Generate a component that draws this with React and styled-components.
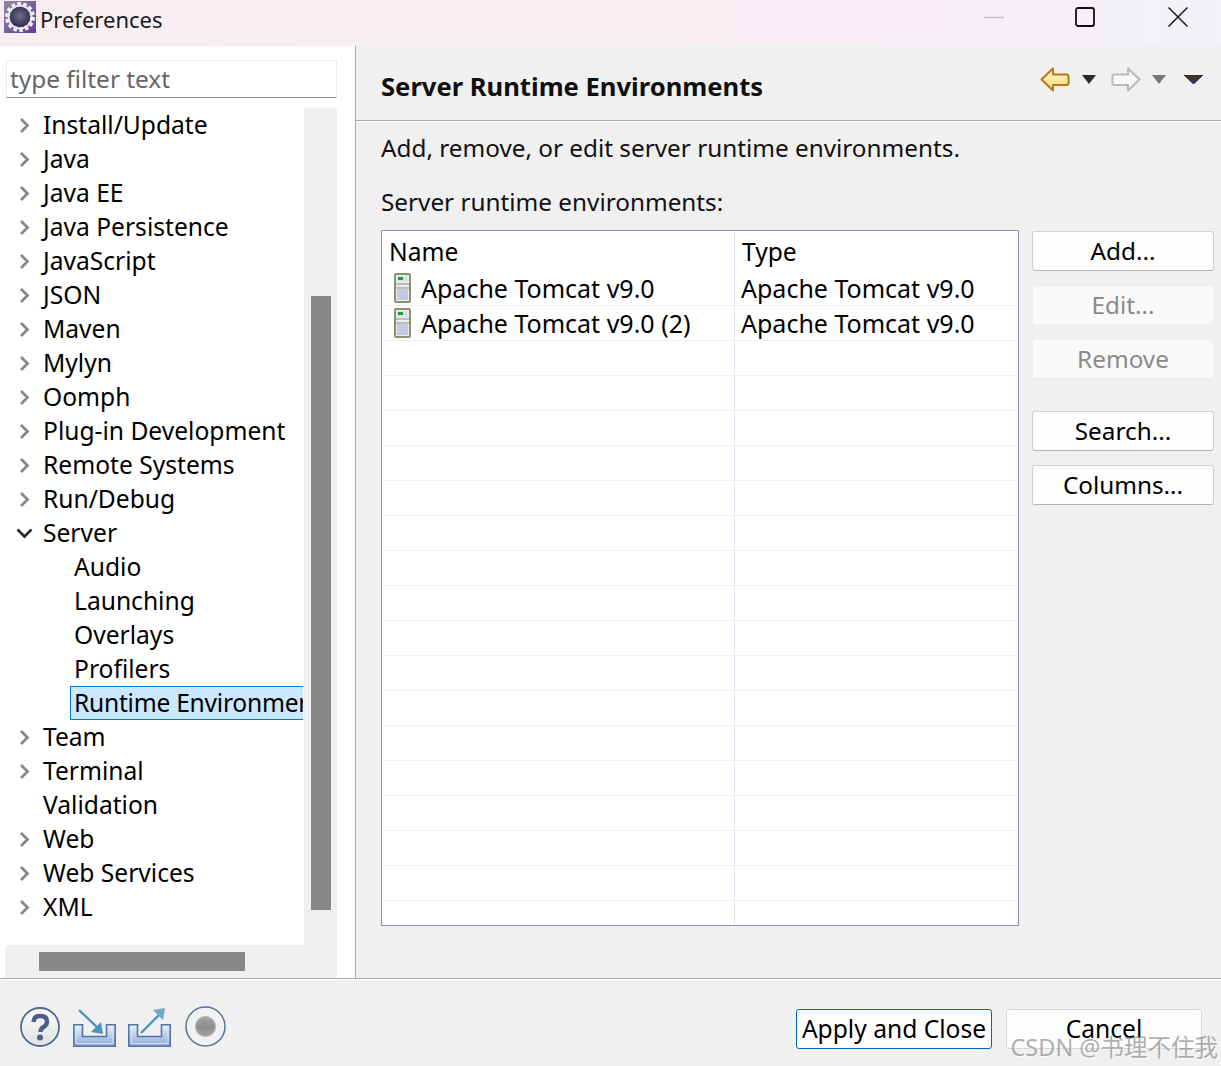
import React from 'react';
import styled, { createGlobalStyle } from 'styled-components';

const GlobalStyle = createGlobalStyle`
  html, body {
    margin: 0;
    padding: 0;
    background: #f0f0f0;
  }
  body {
    font-family: "Noto Sans", "Open Sans", sans-serif;
    font-size: 25px;
    color: #000;
  }
  * { box-sizing: border-box; }
`

const Window = styled.div`
  position: relative;
  width: 1221px;
  height: 1066px;
  display: flex;
  flex-direction: column;
  overflow: hidden;
`

const TitleBar = styled.div`
  height: 46px;
  flex: none;
  display: flex;
  align-items: flex-start;
  padding: 1px 0 0 4px;
  background: linear-gradient(90deg, #f7eef2 0%, #f8eef5 75%, #f3f2f9 100%);
`

const TitleText = styled.span`
  margin-left: 4px;
  margin-top: 2px;
  font-size: 22px;
  line-height: 32px;
  color: #1a1a1a;
`

const WindowControls = styled.div`
  margin-left: auto;
  margin-top: 6px;
  display: flex;
  gap: 71px;
  padding-right: 33px;
  svg:last-child {
    margin-left: 2px;
  }
`

const Body = styled.div`
  flex: 1;
  min-height: 0;
  display: flex;
`

const Sidebar = styled.div`
  width: 356px;
  flex: none;
  background: #fff;
  border-right: 1px solid #a8a8a8;
  padding: 14px 18px 0 5px;
  display: flex;
  flex-direction: column;
`

const FilterInput = styled.div`
  height: 38px;
  flex: none;
  margin-left: 1px;
  padding-left: 3px;
  line-height: 35px;
  font-size: 24.4px;
  color: #666;
  background: #fff;
  border: 1px solid #ececec;
  border-bottom: 1px solid #8c8c8c;
`

const TreeFrame = styled.div`
  flex: 1;
  min-height: 0;
  margin-top: 10px;
  display: grid;
  grid-template-columns: 299px 33px;
  grid-template-rows: 837px 33px;
`

const Tree = styled.div`
  overflow: hidden;
  background: #fff;
  font-size: 24.6px;
`

const TreeRow = styled.div`
  height: 34px;
  display: flex;
  align-items: center;
  white-space: nowrap;
  padding-left: ${props => (props.$child ? '65px' : '11px')};
`

const Chevron = styled.span`
  width: 17px;
  height: 17px;
  flex: none;
  margin-right: 8px;
  display: flex;
  align-items: center;
  justify-content: center;
`

const TreeLabel = styled.span`
  flex: ${props => (props.$selected ? '1' : 'none')};
  height: 34px;
  line-height: 33px;
  padding-left: 4px;
  margin-left: ${props => (props.$indented ? '0' : '-2px')};
  ${props => props.$selected && `
    background: #cce8ff;
    border: 1px solid #0078d7;
    border-right: none;
    padding-left: 3px;
    line-height: 31px;
    margin-right: 1px;
    letter-spacing: -0.25px;
    overflow: hidden;
  `}
`

const ScrollTrack = styled.div`
  background: #f0f0f0;
  padding: ${props => (props.$horizontal ? '7px 0 7px 34px' : '188px 6px 0 7px')};
  ${props => props.$horizontal && 'grid-column: 1 / 3;'}
`

const ScrollThumb = styled.div`
  background: #888;
  width: ${props => (props.$horizontal ? '206px' : '20px')};
  height: ${props => (props.$horizontal ? '19px' : '614px')};
`

const Content = styled.div`
  flex: 1;
  min-width: 0;
  display: flex;
  flex-direction: column;
`

const PageHeader = styled.div`
  height: 75px;
  flex: none;
  display: flex;
  align-items: center;
  padding: 6px 18px 0 25px;
  border-bottom: 1px solid #a8a8a8;
  box-shadow: 0 1px 0 #fff;
`

const PageTitle = styled.h1`
  margin: 0;
  font-size: 25.6px;
  font-weight: 700;
  color: #0f0f0f;
`

const HeaderTools = styled.div`
  margin-left: auto;
  margin-top: -14px;
  display: flex;
  align-items: center;
`

const PageBody = styled.div`
  flex: 1;
  min-height: 0;
  padding: 10px 7px 0 25px;
`

const Description = styled.p`
  margin: 0;
  height: 34px;
  line-height: 33px;
  font-size: 24.3px;
  color: #111;
`

const SectionLabel = styled(Description)`
  margin-top: 20px;
`

const TableArea = styled.div`
  display: flex;
  margin-top: 11px;
  gap: 13px;
`

const Table = styled.div`
  width: 638px;
  height: 696px;
  flex: none;
  background: #fff;
  border: 1px solid #8d96a8;
  padding-top: 1px;
  overflow: hidden;
`

const TableRow = styled.div`
  display: grid;
  grid-template-columns: 353px 1fr;
  height: ${props => (props.$header ? '39px' : '35px')};
  ${props => !props.$header && 'border-bottom: 1px solid #eef0f3;'}
`

const Cell = styled.div`
  display: flex;
  align-items: center;
  white-space: nowrap;
  padding-left: ${props => (props.$header ? '7px' : props.$second ? '6px' : '12px')};
  font-size: ${props => (props.$header ? '24.6px' : '25px')};
  border-right: ${props => (props.$second ? 'none' : '1px solid #dfe8f5')};
`

const CellIcon = styled.span`
  width: 18px;
  height: 32px;
  flex: none;
  margin-right: 9px;
  display: flex;
  align-items: center;
`

const ButtonColumn = styled.div`
  width: 182px;
  flex: none;
  padding-top: 1px;
  display: flex;
  flex-direction: column;
`

const PushButton = styled.div`
  height: 40px;
  margin-bottom: ${props => props.$gap || 14}px;
  padding-bottom: 2px;
  display: flex;
  align-items: center;
  justify-content: center;
  border-radius: 3px;
  font-size: 24.3px;
  background: ${props => (props.$disabled ? '#f9f9f9' : '#fdfdfd')};
  border: 1px solid ${props => (props.$disabled ? '#efefef' : '#d0d0d0')};
  border-bottom-color: ${props => (props.$disabled ? '#ececec' : '#b4b4b4')};
  color: ${props => (props.$disabled ? '#8a8a8a' : '#000')};
`

const Footer = styled.div`
  height: 88px;
  flex: none;
  display: flex;
  align-items: center;
  padding: 8px 19px 0 20px;
  background: #f0f0f0;
  border-top: 1px solid #a8a8a8;
  box-shadow: inset 0 1px 0 #fff;
`

const FooterTools = styled.div`
  display: flex;
  align-items: center;
  gap: 12px;
  svg:first-child {
    margin-right: 1px;
  }
  svg:last-child {
    margin-left: 2px;
  }
`

const FooterButtons = styled.div`
  margin-left: auto;
  margin-top: 5px;
  display: flex;
  gap: 14px;
`

const DialogButton = styled(PushButton)`
  width: 196px;
  margin-bottom: 0;
  font-size: 24.6px;
  border-color: ${props => (props.$primary ? '#0067c0' : '#d6d6d6')};
  border-bottom-color: ${props => (props.$primary ? '#0067c0' : '#d6d6d6')};
`

const HeaderSpacer = styled.span`
  width: ${props => props.$width}px;
`

const Watermark = styled.div`
  position: absolute;
  right: 3px;
  bottom: 3px;
  font-family: "Noto Sans", "Noto Sans CJK SC", sans-serif;
  font-size: 23.5px;
  line-height: 32px;
  white-space: nowrap;
  color: rgba(120, 120, 120, 0.6);
  text-shadow: 1px 1px 0 rgba(255, 255, 255, 0.7);
`

const AppIcon = () => (
  <svg width="32" height="32" viewBox="0 0 32 32">
    <defs>
      <linearGradient id="appBack" x1="0" y1="0" x2="1" y2="1">
        <stop offset="0" stopColor="#8d8aa0" />
        <stop offset="1" stopColor="#5f3c9a" />
      </linearGradient>
      <radialGradient id="appCore" cx="0.5" cy="0.45" r="0.6">
        <stop offset="0" stopColor="#6d6a8e" />
        <stop offset="1" stopColor="#2a2748" />
      </radialGradient>
    </defs>
    <rect width="32" height="32" fill="url(#appBack)" />
    <circle cx="16" cy="16" r="12.5" fill="none" stroke="#f2f2f2" strokeWidth="5" strokeDasharray="3.4 2.2" />
    <circle cx="16" cy="16" r="11.5" fill="none" stroke="#e8e8e8" strokeWidth="2" />
    <circle cx="16" cy="16" r="10.2" fill="url(#appCore)" />
  </svg>
)

const MinimizeIcon = () => (
  <svg width="20" height="20" viewBox="0 0 20 20">
    <path d="M0 10.5H20" stroke="#c8c4c8" strokeWidth="1.6" />
  </svg>
)

const MaximizeIcon = () => (
  <svg width="20" height="20" viewBox="0 0 20 20">
    <rect x="1" y="1" width="18" height="18" rx="2" fill="none" stroke="#111" strokeWidth="1.8" />
  </svg>
)

const CloseIcon = () => (
  <svg width="20" height="20" viewBox="0 0 20 20">
    <path d="M0.5 0.5L19.5 19.5M19.5 0.5L0.5 19.5" stroke="#1a1a1a" strokeWidth="1.5" />
  </svg>
)

const BackIcon = () => (
  <svg width="30" height="25" viewBox="0 0 30 25">
    <defs>
      <linearGradient id="backFill" x1="0" y1="0" x2="0" y2="1">
        <stop offset="0" stopColor="#fffbe2" />
        <stop offset="1" stopColor="#fbd66f" />
      </linearGradient>
    </defs>
    <path d="M1.5 12.5L13 1.5V7.5H26.5Q28.5 7.5 28.5 9.5V16Q28.5 18 26.5 18H13V23.5Z" fill="url(#backFill)" stroke="#b87a14" strokeWidth="2" strokeLinejoin="round" />
  </svg>
)

const ForwardIcon = () => (
  <svg width="30" height="25" viewBox="0 0 30 25">
    <path d="M28.5 12.5L17 1.5V7.5H3.5Q1.5 7.5 1.5 9.5V16Q1.5 18 3.5 18H17V23.5Z" fill="#f8f8f8" stroke="#b8b8b8" strokeWidth="2" strokeLinejoin="round" />
  </svg>
)

const DropTriangle = styled(({ color, width = 14, edge, className }) => (
  <svg className={className} width={width} height="9" viewBox={`0 0 ${width} 9`}>
    <path d={`M0 0H${width}L${width / 2} 9Z`} fill={color} />
    {edge && <path d={`M0 0.5H${width}M0 0L${width / 2} 9L${width} 0`} fill="none" stroke={edge} strokeWidth="1" />}
  </svg>
))`
  margin-left: ${props => props.$offset || 0}px;
`

const ChevronRight = () => (
  <svg width="11" height="17" viewBox="0 0 11 17">
    <path d="M2 2L8.5 8.5L2 15" fill="none" stroke="#868686" strokeWidth="2.7" />
  </svg>
)

const ChevronDown = () => (
  <svg width="17" height="11" viewBox="0 0 17 11">
    <path d="M1.5 1.5L8.5 8.5L15.5 1.5" fill="none" stroke="#2b2b2b" strokeWidth="2.7" />
  </svg>
)

const ServerIcon = () => (
  <svg width="18" height="30" viewBox="0 0 18 30">
    <rect x="1" y="1" width="15" height="28" rx="1" fill="#e9ecf2" stroke="#8b9270" strokeWidth="2" />
    <rect x="3" y="3" width="11" height="6" fill="#dfe3ea" />
    <rect x="4" y="4" width="5" height="3" fill="#12a33c" />
    <path d="M2 11H15" stroke="#8b9270" strokeWidth="1" />
    <rect x="3" y="16" width="11" height="11" fill="#c3cbe2" />
    <path d="M2 15H15" stroke="#8b9270" strokeWidth="1" />
  </svg>
)

const HelpIcon = () => (
  <svg width="40" height="40" viewBox="0 0 40 40">
    <defs>
      <linearGradient id="helpFill" x1="0" y1="0" x2="0" y2="1">
        <stop offset="0" stopColor="#fafafa" />
        <stop offset="1" stopColor="#e2e2e2" />
      </linearGradient>
    </defs>
    <circle cx="20" cy="20" r="19" fill="url(#helpFill)" stroke="#52698f" strokeWidth="1.8" />
    <path d="M13.5 15Q14 9 20 9Q27 9 27 14.5Q27 18 23.5 20Q20.5 21.7 20.5 25" fill="none" stroke="#4a6088" strokeWidth="4.4" />
    <circle cx="20" cy="30.5" r="3" fill="#4a6088" />
  </svg>
)

const TrayIcon = ({ id, arrow }) => (
  <svg width="43" height="40" viewBox="0 0 43 40">
    <defs>
      <linearGradient id={id} x1="0" y1="0" x2="0" y2="1">
        <stop offset="0" stopColor="#eef2f9" />
        <stop offset="1" stopColor="#8fa9d6" />
      </linearGradient>
    </defs>
    <path d="M0.8 17.8H9.5V29.5H33.5V17.8H42.2V39.2H0.8Z" fill={`url(#${id})`} stroke="#4f74a8" strokeWidth="1.6" />
    <path d="M3 20V36.5H40V20" fill="none" stroke="#d7e0f0" strokeWidth="1" />
    {arrow}
  </svg>
)

const ImportArrow = (
  <g>
    <path d="M6 3L26 22" stroke="#4b94c0" strokeWidth="2.4" />
    <path d="M30 27L28 15L18 25Z" fill="#4b94c0" />
  </g>
)

const ExportArrow = (
  <g>
    <path d="M13 26L32 7" stroke="#4b94c0" strokeWidth="2.4" />
    <path d="M37 1L25 3L35 13Z" fill="#6fa8c8" />
  </g>
)

const RecordIcon = () => (
  <svg width="41" height="41" viewBox="0 0 41 41">
    <defs>
      <linearGradient id="recordFill" x1="0" y1="0" x2="0" y2="1">
        <stop offset="0" stopColor="#a8a8a8" />
        <stop offset="0.5" stopColor="#8c8c8c" />
        <stop offset="1" stopColor="#a0a0a0" />
      </linearGradient>
    </defs>
    <circle cx="20.5" cy="20.5" r="19.5" fill="#f2f2f2" stroke="#5a7096" strokeWidth="1.5" />
    <circle cx="20.5" cy="20.5" r="10" fill="url(#recordFill)" stroke="#b8b8b8" strokeWidth="1.2" />
  </svg>
)

const treeItems = [
  { label: 'Install/Update', arrow: 'right' },
  { label: 'Java', arrow: 'right' },
  { label: 'Java EE', arrow: 'right' },
  { label: 'Java Persistence', arrow: 'right' },
  { label: 'JavaScript', arrow: 'right' },
  { label: 'JSON', arrow: 'right' },
  { label: 'Maven', arrow: 'right' },
  { label: 'Mylyn', arrow: 'right' },
  { label: 'Oomph', arrow: 'right' },
  { label: 'Plug-in Development', arrow: 'right' },
  { label: 'Remote Systems', arrow: 'right' },
  { label: 'Run/Debug', arrow: 'right' },
  { label: 'Server', arrow: 'down' },
  { label: 'Audio', child: true },
  { label: 'Launching', child: true },
  { label: 'Overlays', child: true },
  { label: 'Profilers', child: true },
  { label: 'Runtime Environments', child: true, selected: true },
  { label: 'Team', arrow: 'right' },
  { label: 'Terminal', arrow: 'right' },
  { label: 'Validation' },
  { label: 'Web', arrow: 'right' },
  { label: 'Web Services', arrow: 'right' },
  { label: 'XML', arrow: 'right' },
]

const runtimes = [
  { name: 'Apache Tomcat v9.0', type: 'Apache Tomcat v9.0' },
  { name: 'Apache Tomcat v9.0 (2)', type: 'Apache Tomcat v9.0' },
]

const emptyRows = Array.from({ length: 17 }, (_, i) => i)

const App = () => {
  return (
    <Window>
      <GlobalStyle />
      <TitleBar>
        <AppIcon />
        <TitleText>Preferences</TitleText>
        <WindowControls>
          <MinimizeIcon />
          <MaximizeIcon />
          <CloseIcon />
        </WindowControls>
      </TitleBar>
      <Body>
        <Sidebar>
          <FilterInput>type filter text</FilterInput>
          <TreeFrame>
            <Tree>
              {treeItems.map(item => (
                <TreeRow key={item.label} $child={item.child}>
                  {!item.child && (
                    <Chevron>
                      {item.arrow === 'right' && <ChevronRight />}
                      {item.arrow === 'down' && <ChevronDown />}
                    </Chevron>
                  )}
                  <TreeLabel $selected={item.selected} $indented={item.child}>{item.label}</TreeLabel>
                </TreeRow>
              ))}
            </Tree>
            <ScrollTrack>
              <ScrollThumb />
            </ScrollTrack>
            <ScrollTrack $horizontal>
              <ScrollThumb $horizontal />
            </ScrollTrack>
          </TreeFrame>
        </Sidebar>
        <Content>
          <PageHeader>
            <PageTitle>Server Runtime Environments</PageTitle>
            <HeaderTools>
              <BackIcon />
              <DropTriangle color="#2b2b2b" $offset={12} />
              <HeaderSpacer $width={15} />
              <ForwardIcon />
              <DropTriangle color="#77777b" $offset={11} />
              <HeaderSpacer $width={18} />
              <DropTriangle color="#3a3340" width={19} edge="#3d1a8c" />
            </HeaderTools>
          </PageHeader>
          <PageBody>
            <Description>Add, remove, or edit server runtime environments.</Description>
            <SectionLabel>Server runtime environments:</SectionLabel>
            <TableArea>
              <Table>
                <TableRow $header>
                  <Cell $header>Name</Cell>
                  <Cell $header $second>Type</Cell>
                </TableRow>
                {runtimes.map(runtime => (
                  <TableRow key={runtime.name}>
                    <Cell>
                      <CellIcon><ServerIcon /></CellIcon>
                      {runtime.name}
                    </Cell>
                    <Cell $second>{runtime.type}</Cell>
                  </TableRow>
                ))}
                {emptyRows.map(i => (
                  <TableRow key={i}>
                    <Cell />
                    <Cell $second />
                  </TableRow>
                ))}
              </Table>
              <ButtonColumn>
                <PushButton>Add...</PushButton>
                <PushButton $disabled>Edit...</PushButton>
                <PushButton $disabled $gap={32}>Remove</PushButton>
                <PushButton>Search...</PushButton>
                <PushButton>Columns...</PushButton>
              </ButtonColumn>
            </TableArea>
          </PageBody>
        </Content>
      </Body>
      <Footer>
        <FooterTools>
          <HelpIcon />
          <TrayIcon id="importFill" arrow={ImportArrow} />
          <TrayIcon id="exportFill" arrow={ExportArrow} />
          <RecordIcon />
        </FooterTools>
        <FooterButtons>
          <DialogButton $primary>Apply and Close</DialogButton>
          <DialogButton>Cancel</DialogButton>
        </FooterButtons>
      </Footer>
      <Watermark>CSDN @书理不住我</Watermark>
    </Window>
  );
}

export default App;
